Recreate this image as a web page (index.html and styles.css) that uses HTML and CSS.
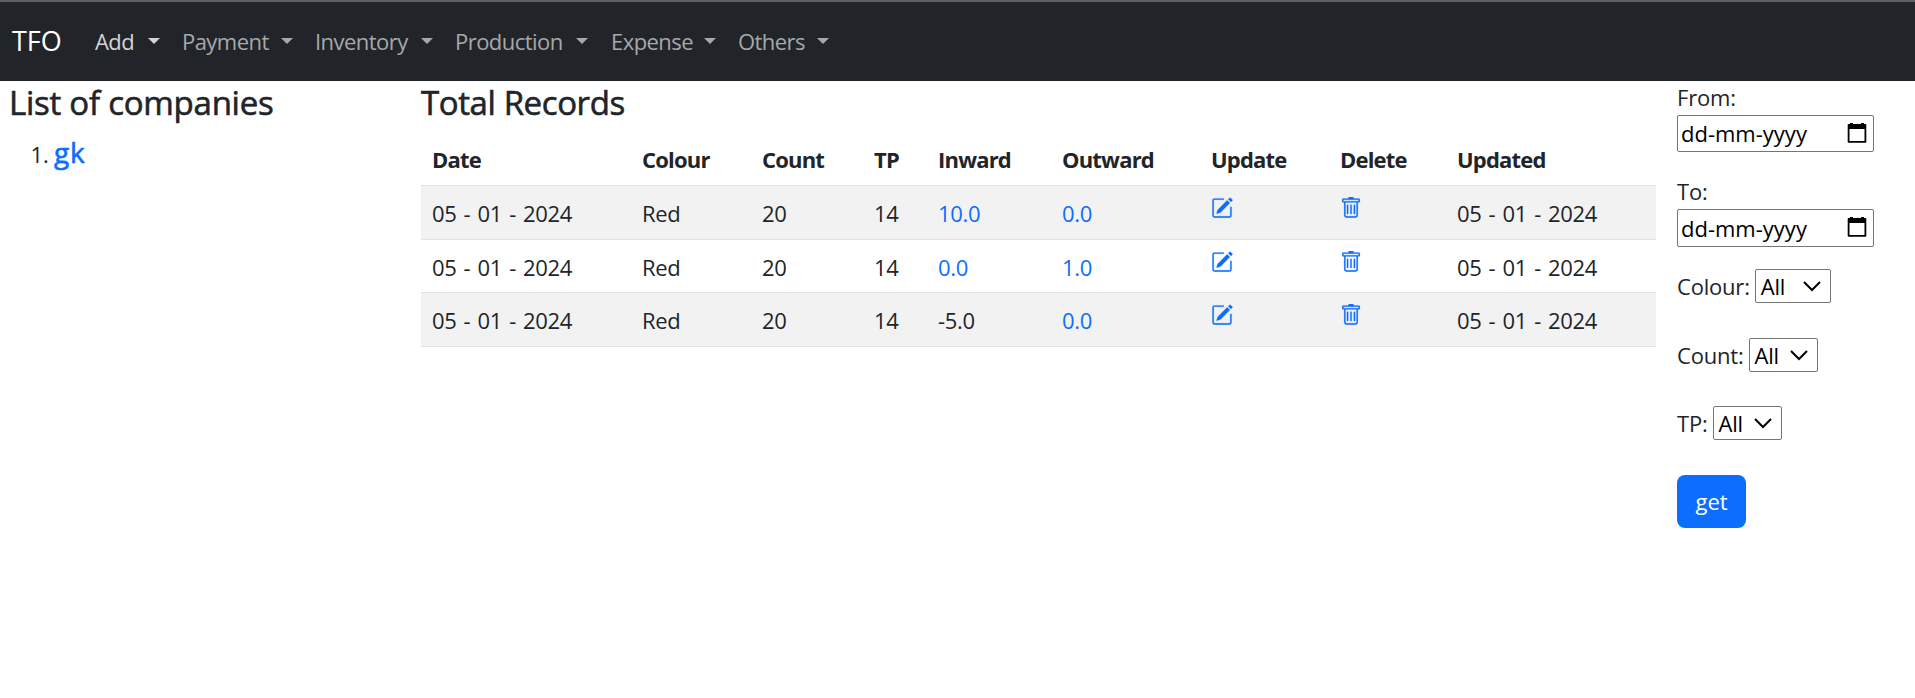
FILE: index.html
```html
<!DOCTYPE html>
<html lang="en">
<head>
<meta charset="utf-8">
<title>TFO</title>
<link rel="stylesheet" href="styles.css">
</head>
<body>
<svg class="defs" width="0" height="0">
  <symbol id="edit" viewBox="0 0 16 16"><path d="M15.502 1.94a.5.5 0 0 1 0 .706L14.459 3.69l-2-2L13.502.646a.5.5 0 0 1 .707 0l1.293 1.293zm-1.75 2.456-2-2L4.939 9.21a.5.5 0 0 0-.121.196l-.805 2.414a.25.25 0 0 0 .316.316l2.414-.805a.5.5 0 0 0 .196-.12l6.813-6.814z"/><path d="M1 13.5A1.5 1.5 0 0 0 2.500 15h11a1.500 1.500 0 0 0 1.500-1.500v-6a.5.5 0 0 0-1 0v6a.5.5 0 0 1-.5.5h-11a.5.5 0 0 1-.5-.5v-11a.5.5 0 0 1 .5-.5H9a.5.5 0 0 0 0-1H2.500A1.500 1.500 0 0 0 1 2.500v11z"/></symbol>
  <symbol id="trash" viewBox="0 0 16 16"><path d="M5.500 5.500A.5.5 0 0 1 6 6v6a.5.5 0 0 1-1 0V6a.5.5 0 0 1 .5-.5zm2.500 0a.5.5 0 0 1 .5.5v6a.5.5 0 0 1-1 0V6a.5.5 0 0 1 .5-.5zm3 .5a.5.5 0 0 0-1 0v6a.5.5 0 0 0 1 0V6z"/><path fill-rule="evenodd" d="M14.500 3a1 1 0 0 1-1 1H13v9a2 2 0 0 1-2 2H5a2 2 0 0 1-2-2V4h-.5a1 1 0 0 1-1-1V2a1 1 0 0 1 1-1H6a1 1 0 0 1 1-1h2a1 1 0 0 1 1 1h3.500a1 1 0 0 1 1 1v1zM4.118 4 4 4.059V13a1 1 0 0 0 1 1h6a1 1 0 0 0 1-1V4.059L11.882 4H4.118zM2.500 3V2h11v1h-11z"/></symbol>
  <symbol id="calendar" viewBox="0 0 20 20"><path fill-rule="evenodd" d="M3 0h3v1h8V0h3v1h1.500q.8 0 .8.8V19q0 .8-.8.8H1.500q-.8 0-.8-.8V1.800Q.7 1 1.500 1H3zM2.500 6v12h15V6z"/></symbol>
  <symbol id="chevron" viewBox="0 0 18 11"><path d="M1 1l8 8 8-8" fill="none" stroke="#000" stroke-width="2"/></symbol>
</svg>
<nav class="navbar">
  <a class="brand">TFO</a>
  <a class="link active add">Add</a>
  <a class="link payment">Payment</a>
  <a class="link inventory">Inventory</a>
  <a class="link production">Production</a>
  <a class="link expense">Expense</a>
  <a class="link others">Others</a>
</nav>
<main class="page">
  <section class="companies">
    <h3 class="title">List of companies</h3>
    <ol class="list"><li><a class="company">gk</a></li></ol>
  </section>
  <section class="records">
    <h3 class="title total">Total Records</h3>
    <table class="table">
      <colgroup><col class="c1"><col class="c2"><col class="c3"><col class="c4"><col class="c5"><col class="c6"><col class="c7"><col class="c8"><col class="c9"></colgroup>
      <thead><tr><th>Date</th><th>Colour</th><th>Count</th><th>TP</th><th>Inward</th><th>Outward</th><th>Update</th><th>Delete</th><th>Updated</th></tr></thead>
      <tbody>
        <tr class="odd"><td>05 - 01 - 2024</td><td>Red</td><td>20</td><td>14</td><td><a>10.0</a></td><td><a>0.0</a></td><td><svg class="icon"><use href="#edit"/></svg></td><td><svg class="icon"><use href="#trash"/></svg></td><td>05 - 01 - 2024</td></tr>
        <tr class="even"><td>05 - 01 - 2024</td><td>Red</td><td>20</td><td>14</td><td><a>0.0</a></td><td><a>1.0</a></td><td><svg class="icon"><use href="#edit"/></svg></td><td><svg class="icon"><use href="#trash"/></svg></td><td>05 - 01 - 2024</td></tr>
        <tr class="odd"><td>05 - 01 - 2024</td><td>Red</td><td>20</td><td>14</td><td>-5.0</td><td><a>0.0</a></td><td><svg class="icon"><use href="#edit"/></svg></td><td><svg class="icon"><use href="#trash"/></svg></td><td>05 - 01 - 2024</td></tr>
      </tbody>
    </table>
  </section>
  <form class="filters">
    <label class="label">From:</label>
    <div class="date"><span>dd-mm-yyyy</span><svg class="cal"><use href="#calendar"/></svg></div>
    <label class="label to">To:</label>
    <div class="date second"><span>dd-mm-yyyy</span><svg class="cal"><use href="#calendar"/></svg></div>
    <div class="row colour"><label>Colour:</label><div class="select wide"><span>All</span><svg class="chev"><use href="#chevron"/></svg></div></div>
    <div class="row count"><label>Count:</label><div class="select"><span>All</span><svg class="chev"><use href="#chevron"/></svg></div></div>
    <div class="row tp"><label>TP:</label><div class="select"><span>All</span><svg class="chev"><use href="#chevron"/></svg></div></div>
    <button class="get" type="button">get</button>
  </form>
</main>
</body>
</html>
```
FILE: styles.css
```css
* { box-sizing: border-box; }
body { margin: 0; background: #fff; color: #212529; font-family: "Open Sans", sans-serif; font-size: 22px; line-height: 32px; letter-spacing: -0.2px; overflow: hidden; }
.defs { display: block; height: 0; }
.navbar { display: flex; align-items: center; height: 81px; border-top: 2px solid #5f6062; background: #212529; padding: 0 0 2px 12px; white-space: nowrap; }
.brand { width: 83px; color: #fff; font-size: 27px; letter-spacing: 0; }
.link { display: flex; align-items: center; justify-content: space-between; color: #a6a8a9; letter-spacing: -0.55px; }
.link::after { content: ""; border-top: 6px solid; border-left: 6px solid transparent; border-right: 6px solid transparent; margin-top: 0; }
.active { color: #d3d3d4; }
.add { width: 65px; margin-right: 22px; }
.payment { width: 111px; margin-right: 22px; }
.inventory { width: 118px; margin-right: 22px; }
.production { width: 133px; margin-right: 23px; }
.expense { width: 105px; margin-right: 22px; }
.others { width: 91px; }
.page { display: grid; grid-template-columns: 412px 1235px 1fr; padding-left: 9px; }
.title { margin: 0; height: 53px; line-height: 43px; font-size: 33px; font-weight: 500; letter-spacing: -0.25px; white-space: nowrap; -webkit-text-stroke: 0.6px; }
.total { letter-spacing: -0.4px; }
.list { margin: 0; padding-left: 45px; }
.list li { line-height: 36px; }
.company { color: #0d6efd; font-size: 28px; font-weight: 500; letter-spacing: 0.7px; -webkit-text-stroke: 0.6px; }
.table { table-layout: fixed; width: 1235px; border-collapse: separate; border-spacing: 0; }
.c1 { width: 210px; } .c2 { width: 120px; } .c3 { width: 112px; } .c4 { width: 64px; } .c5 { width: 124px; } .c6 { width: 149px; } .c7 { width: 129px; } .c8 { width: 117px; } .c9 { width: 210px; }
th, td { text-align: left; padding: 0 0 0 11px; border-bottom: 1px solid #dee2e6; white-space: nowrap; }
th { height: 52px; font-weight: 700; letter-spacing: -0.8px; padding-bottom: 2px; }
td { height: 54px; letter-spacing: -0.35px; word-spacing: 1.8px; }
.even td { height: 53px; padding-top: 1px; }
.odd td { background: #f2f2f2; }
td a { color: #0d6efd; }
.icon { display: block; width: 22px; height: 22px; margin-top: -10px; fill: #0d6efd; stroke: #0d6efd; stroke-width: 0.15; }
.filters { display: flex; flex-direction: column; align-items: flex-start; padding: 1px 0 0 21px; }
.label { height: 33px; line-height: 31px; }
.date { display: flex; align-items: center; justify-content: space-between; width: 197px; height: 37px; border: 1px solid #767676; border-radius: 2px; padding: 0 6px 1px 3px; color: #000; letter-spacing: 0; }
.second { height: 38px; }
.to { margin-top: 24px; }
.cal { width: 20px; height: 20px; margin-top: -1px; }
.row { display: flex; align-items: center; gap: 5px; height: 34px; }
.select { display: flex; align-items: center; justify-content: space-between; width: 69px; height: 34px; border: 1px solid #767676; border-radius: 2px; padding: 0 9px 0 5px; color: #000; }
.wide { width: 76px; }
.chev { width: 18px; height: 11px; }
.colour { margin-top: 22px; }
.count { margin-top: 35px; }
.tp { margin-top: 34px; }
.get { margin-top: 35px; width: 69px; height: 53px; border: 0; border-radius: 8px; background: #0d6efd; color: #fff; font: inherit; letter-spacing: -0.1px; padding: 0 0 2px; }
```
